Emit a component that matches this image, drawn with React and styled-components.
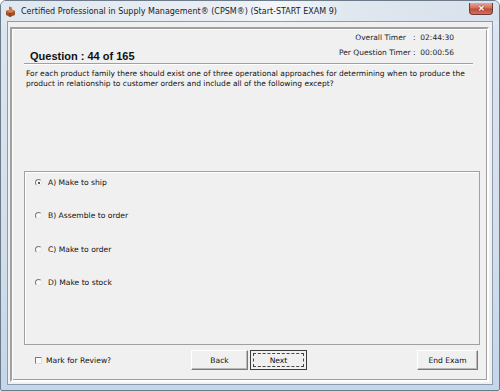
import React from "react";
import styled, { createGlobalStyle } from "styled-components";

const Global = createGlobalStyle`
  html, body { margin: 0; padding: 0; background: #fff; }
  body { font-family: "DejaVu Sans", Tahoma, sans-serif; }
  * { box-sizing: border-box; }
`;

const Window = styled.div`
  width: 500px;
  height: 391px;
  display: flex;
  flex-direction: column;
  border: 1px solid #6c7a8a;
  border-radius: 6px 6px 2px 2px;
  background: linear-gradient(180deg, #e9eff5 0%, #dbe5ef 8%, #d3dfeb 60%, #c4d6e9 100%);
  overflow: hidden;
`;

const TitleBar = styled.div`
  height: 20px;
  flex: none;
  display: flex;
  align-items: center;
  padding: 0 6px 0 4px;
  background: linear-gradient(100deg, #dfe7ef 0%, #e9eef4 45%, #f3f6f9 55%, #dfe7ef 70%, #d8e2ec 100%);
`;

const AppIcon = styled.svg`
  width: 11px;
  height: 11px;
  flex: none;
  margin-right: 5px;
`;

const Title = styled.div`
  font-size: 8px;
  color: #1b1b1b;
  white-space: nowrap;
  flex: 1;
`;

const CloseBtn = styled.div`
  width: 24px;
  height: 12px;
  margin-top: -4px;
  flex: none;
  border: 1px solid #6b3a35;
  border-top: none;
  border-radius: 0 0 4px 4px;
  background: linear-gradient(180deg, #e8a596 0%, #d2705e 45%, #c04a36 55%, #d4735c 100%);
  display: flex;
  align-items: center;
  justify-content: center;
  color: #fff;
  font-size: 8px;
  font-weight: bold;
  font-family: "Liberation Sans", sans-serif;
  text-shadow: 0 0 2px #7a2a20;
`;

const Client = styled.div`
  flex: 1;
  margin: 0 6px 5px 6px;
  border: 1px solid #8d9cad;
  background: #f0f0f0;
  display: flex;
  padding: 5px 3px 2px 2px;
`;

const Groove = styled.div`
  flex: 1;
  border: 2px solid;
  border-color: #a0a0a0 #fff #fff #a0a0a0;
  box-shadow: 1px 1px 0 #fff inset, -1px -1px 0 #a0a0a0 inset;
  display: flex;
  flex-direction: column;
  padding: 0 7px 0 12px;
`;

const TopRow = styled.div`
  display: flex;
  justify-content: space-between;
  align-items: flex-end;
  padding-right: 26px;
`;

const Header = styled.div`
  font-family: "Liberation Sans", Arial, sans-serif;
  font-weight: bold;
  font-size: 11px;
  color: #111;
  padding-left: 6px;
  line-height: 14px;
`;

const Timers = styled.div`
  display: flex;
  flex-direction: column;
  align-items: flex-end;
  margin-top: 1px;
  margin-bottom: 3px;
`;

const TimerRow = styled.div`
  font-size: 7.5px;
  line-height: 15px;
  color: #222;
  white-space: pre;
`;

const Separator = styled.div`
  height: 2px;
  margin-right: 7px;
  border-top: 1px solid #a0a0a0;
  border-bottom: 1px solid #fff;
`;

const QuestionText = styled.div`
  font-size: 7.5px;
  line-height: 9.5px;
  color: #111;
  padding-left: 2px;
  margin-top: 4px;
  white-space: nowrap;
`;

const OptionsBox = styled.div`
  margin-top: auto;
  height: 174px;
  border: 1px solid #a0a0a0;
  box-shadow: 1px 1px 0 #fff inset;
  display: flex;
  flex-direction: column;
  gap: 20.3px;
  padding: 4px 0 0 10px;
`;

const OptionRow = styled.label`
  display: flex;
  align-items: center;
  height: 13px;
  font-size: 7.6px;
  color: #111;
`;

const Radio = styled.span`
  width: 7px;
  height: 7px;
  border-radius: 50%;
  border: 1px solid;
  border-color: #7a7a7a #e8e8e8 #e8e8e8 #7a7a7a;
  background: #fafafa;
  margin-right: 6px;
  position: relative;
  flex: none;
  &::after {
    content: "";
    display: ${(p) => (p.$checked ? "block" : "none")};
    position: absolute;
    left: 1.5px;
    top: 1.5px;
    width: 2px;
    height: 2px;
    border-radius: 50%;
    background: #222;
  }
`;

const BottomRow = styled.div`
  height: 35px;
  flex: none;
  display: grid;
  grid-template-columns: 1fr auto 1fr;
  align-items: start;
  padding-top: 5px;
`;

const Review = styled.label`
  display: flex;
  align-items: center;
  font-size: 7.6px;
  color: #111;
  padding-left: 11px;
  margin-top: 4px;
  height: 13px;
`;

const CheckBox = styled.span`
  width: 7px;
  height: 7px;
  border: 1px solid;
  border-color: #7a7a7a #e0e0e0 #e0e0e0 #7a7a7a;
  background: #fafafa;
  margin-right: 4px;
  flex: none;
`;

const ButtonGroup = styled.div`
  display: flex;
  gap: 2px;
  margin-right: 6px;
`;

const Button = styled.div`
  width: ${(p) => p.$w || 57}px;
  height: 20px;
  display: flex;
  align-items: center;
  justify-content: center;
  font-size: 7.6px;
  color: #111;
  background: #f0f0f0;
  border: 1px solid;
  border-color: #fff #7a7a7a #7a7a7a #fff;
  box-shadow: inset -1px -1px 0 #b8b8b8;
  justify-self: ${(p) => (p.$end ? "end" : "auto")};
  margin-right: ${(p) => (p.$end ? "2px" : "0")};
  position: relative;
  ${(p) =>
    p.$focus &&
    `
    border-color: #3c3c3c;
    box-shadow: none;
    &::before {
      content: "";
      position: absolute;
      inset: 2px;
      border: 1px dashed #444;
    }
  `}
`;

export default function App() {
  const options = [
    "A) Make to ship",
    "B) Assemble to order",
    "C) Make to order",
    "D) Make to stock",
  ];
  return (
    <>
      <Global />
      <Window>
        <TitleBar>
          <AppIcon viewBox="0 0 11 11">
            <path d="M1 5 L6 3 L10 5 L10 9 L5 11 L1 9 Z" fill="#a0522d" />
            <path d="M1 5 L5 7 L10 5 L6 3 Z" fill="#d9824a" />
            <path d="M5 7 L5 11" stroke="#6b2f12" strokeWidth="0.8" />
            <path d="M4 0.5 L7 1.5 L6.5 4 L4 3 Z" fill="#c56a3a" />
          </AppIcon>
          <Title>Certified Professional in Supply Management® (CPSM®) (Start-START EXAM 9)</Title>
          <CloseBtn>✕</CloseBtn>
        </TitleBar>
        <Client>
          <Groove>
            <TopRow>
              <Header>Question : 44 of 165</Header>
              <Timers>
                <TimerRow>{"Overall Timer   :  02:44:30"}</TimerRow>
                <TimerRow>{"Per Question Timer :  00:00:56"}</TimerRow>
              </Timers>
            </TopRow>
            <Separator />
            <QuestionText>
              For each product family there should exist one of three operational approaches for determining when to produce the
              <br />
              product in relationship to customer orders and include all of the following except?
            </QuestionText>
            <OptionsBox>
              {options.map((o, i) => (
                <OptionRow key={o}>
                  <Radio $checked={i === 0} />
                  {o}
                </OptionRow>
              ))}
            </OptionsBox>
            <BottomRow>
              <Review>
                <CheckBox />
                Mark for Review?
              </Review>
              <ButtonGroup>
                <Button>Back</Button>
                <Button $focus>Next</Button>
              </ButtonGroup>
              <Button $w={61} $end>End Exam</Button>
            </BottomRow>
          </Groove>
        </Client>
      </Window>
    </>
  );
}
